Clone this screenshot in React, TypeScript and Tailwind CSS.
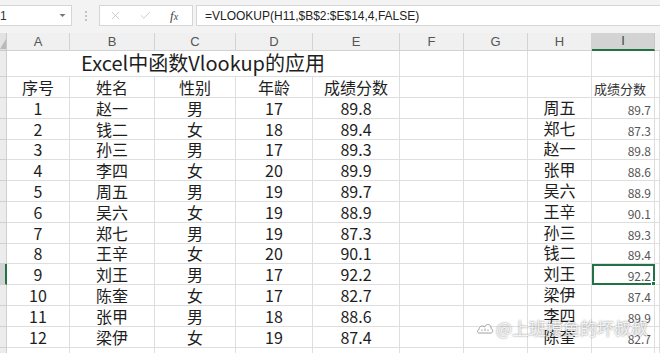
import React from "react";
import { X, Check } from "lucide-react";

const students = [
  ["1", "赵一", "男", "17", "89.8"],
  ["2", "钱二", "女", "18", "89.4"],
  ["3", "孙三", "男", "17", "89.3"],
  ["4", "李四", "女", "20", "89.9"],
  ["5", "周五", "男", "19", "89.7"],
  ["6", "吴六", "女", "19", "88.9"],
  ["7", "郑七", "男", "19", "87.3"],
  ["8", "王辛", "女", "20", "90.1"],
  ["9", "刘王", "男", "17", "92.2"],
  ["10", "陈奎", "女", "17", "82.7"],
  ["11", "张甲", "男", "18", "88.6"],
  ["12", "梁伊", "女", "19", "87.4"],
];

const lookup = [
  ["周五", "89.7"],
  ["郑七", "87.3"],
  ["赵一", "89.8"],
  ["张甲", "88.6"],
  ["吴六", "88.9"],
  ["王辛", "90.1"],
  ["孙三", "89.3"],
  ["钱二", "89.4"],
  ["刘王", "92.2"],
  ["梁伊", "87.4"],
  ["李四", "89.9"],
  ["陈奎", "82.7"],
];

const letters = ["A", "B", "C", "D", "E", "F", "G", "H", "I"];

// base grid cell, no font size here so the variants below don't fight
const base = "flex border-r border-b border-[#dedede] leading-none";
const empty = base;
const big = `${base} items-end justify-center pb-[2px] text-[16px] text-[#1e1e1e]`;
const small = `${base} items-end justify-end pr-[3px] pb-[2px] text-[12px] text-[#555]`;
const rowHead = "border-r border-b border-[#cfcfcf] bg-[#ececec]";

const FormulaBar: React.FC = () => (
  <div className="h-[33px] bg-[#f3f3f3] flex items-start pt-[5px] font-['Liberation_Sans',sans-serif]">
    <div className="w-[72px] h-[21px] bg-white border-y border-r border-[#d6d6d6] flex items-center justify-between pr-[5px]">
      <span className="text-[12px] text-[#333]">1</span>
      <svg width="7" height="5" viewBox="0 0 7 5">
        <path d="M0.5 1 L3.5 4 L6.5 1" fill="#777" />
      </svg>
    </div>
    <div className="w-[27px] h-[21px] flex flex-col items-center justify-center gap-[2px]">
      <span className="w-[2px] h-[2px] bg-[#c4c4c4]" />
      <span className="w-[2px] h-[2px] bg-[#c4c4c4]" />
      <span className="w-[2px] h-[2px] bg-[#c4c4c4]" />
    </div>
    <div className="w-[94px] h-[21px] bg-white border border-[#d6d6d6] flex items-center">
      <X size={13} strokeWidth={1.2} className="ml-[9px] text-[#b4b4b4]" />
      <Check size={13} strokeWidth={1.2} className="ml-[17px] text-[#b4b4b4]" />
      <span className="ml-[18px] font-['Liberation_Serif',serif] italic text-[13px] text-[#444]">
        f<span className="text-[10px]">x</span>
      </span>
    </div>
    <div className="ml-[3px] flex-1 h-[21px] bg-white border-y border-l border-[#d6d6d6] flex items-center pl-[8px] text-[12px] text-[#222]">
      =VLOOKUP(H11,$B$2:$E$14,4,FALSE)
    </div>
  </div>
);

const Watermark: React.FC = () => (
  <div className="absolute left-[476px] top-[315px] flex items-center gap-[2px] text-white/85 text-[17px] [text-shadow:0_0_2px_rgba(0,0,0,0.55)]">
    <svg width="18" height="16" viewBox="0 0 18 16" className="opacity-80">
      <path d="M3 13 C1 13 1 10 3 9.5 C3 6 7 5 8.5 7 C10 3 16 4 15 8.5 C17.5 9 17 13 15 13 Z" fill="rgba(255,255,255,0.8)" stroke="#8a8a8a" strokeWidth="1" />
      <path d="M6 11 L6 9.5 M9 11 L9 8.5 M12 11 L12 9.5" stroke="#8a8a8a" strokeWidth="1" />
    </svg>
    <span>@上班摸鱼的坏叔叔</span>
  </div>
);

const App: React.FC = () => {
  return (
    <div className="relative w-[660px] h-[353px] overflow-hidden bg-white font-['Noto_Sans_CJK_SC',sans-serif]">
      <FormulaBar />
      <div className="grid grid-cols-[7px_63px_85px_81px_77px_87px_64px_64px_64px_63px_1fr] grid-rows-[18px_26px_21px_repeat(12,20.8px)_20px]">
        {/* column letters */}
        <div className="border-r border-b border-[#c8c8c8] bg-[#e2e2e2] relative overflow-hidden">
          <svg width="7" height="18" viewBox="0 0 7 18" className="absolute inset-0">
            <path d="M0 16 L6 16 L6 6 Z" fill="#b9b9b9" />
          </svg>
        </div>
        {letters.map((l) =>
          l === "I" ? (
            <div key={l} className="flex items-center justify-center bg-[#d3d3d3] border-r border-[#c8c8c8] border-b-2 border-b-[#217346] text-[13px] text-[#2f4f3e] font-['Liberation_Sans',sans-serif]">
              {l}
            </div>
          ) : (
            <div key={l} className="flex items-center justify-center bg-[#f0f0f0] border-r border-b border-[#d2d2d2] text-[13px] text-[#555] font-['Liberation_Sans',sans-serif]">
              {l}
            </div>
          )
        )}
        <div className="bg-[#f0f0f0] border-b border-[#d2d2d2]" />

        {/* row 1: title */}
        <div className={rowHead} />
        <div className={`${base} col-span-5 items-end justify-center pb-[3px] text-[20px] text-[#1e1e1e]`}>
          Excel中函数Vlookup的应用
        </div>
        <div className={empty} />
        <div className={empty} />
        <div className={empty} />
        <div className={empty} />
        <div className={empty} />

        {/* row 2: headers */}
        <div className={rowHead} />
        {["序号", "姓名", "性别", "年龄", "成绩分数"].map((h) => (
          <div key={h} className={big}>{h}</div>
        ))}
        <div className={empty} />
        <div className={empty} />
        <div className={empty} />
        <div className={`${base} items-end pb-[2px] pl-[2px] text-[13px] text-[#333] whitespace-nowrap`}>成绩分数</div>
        <div className={empty} />

        {/* data rows */}
        {students.map((s, i) => (
          <React.Fragment key={s[0]}>
            <div className={i === 8 ? "border-b border-[#cfcfcf] bg-[#d3d3d3] border-r-2 border-r-[#217346]" : rowHead} />
            {s.map((v, j) => (
              <div key={j} className={big}>{v}</div>
            ))}
            <div className={empty} />
            <div className={empty} />
            <div className={`${big} pb-[3px]`}>{lookup[i][0]}</div>
            {i === 8 ? (
              <div className="relative flex items-end justify-end pr-[2px] pb-[1px] border-2 border-[#217346] text-[12px] text-[#555] leading-none">
                {lookup[i][1]}
                <span className="absolute right-[-3px] bottom-[-3px] w-[5px] h-[5px] bg-[#217346] border border-white" />
              </div>
            ) : (
              <div className={small}>{lookup[i][1]}</div>
            )}
            <div className={empty} />
          </React.Fragment>
        ))}

        {/* partial row */}
        <div className={rowHead} />
        {Array.from({ length: 10 }).map((_, k) => (
          <div key={k} className={empty} />
        ))}
      </div>
      <Watermark />
    </div>
  );
};

export default App;
